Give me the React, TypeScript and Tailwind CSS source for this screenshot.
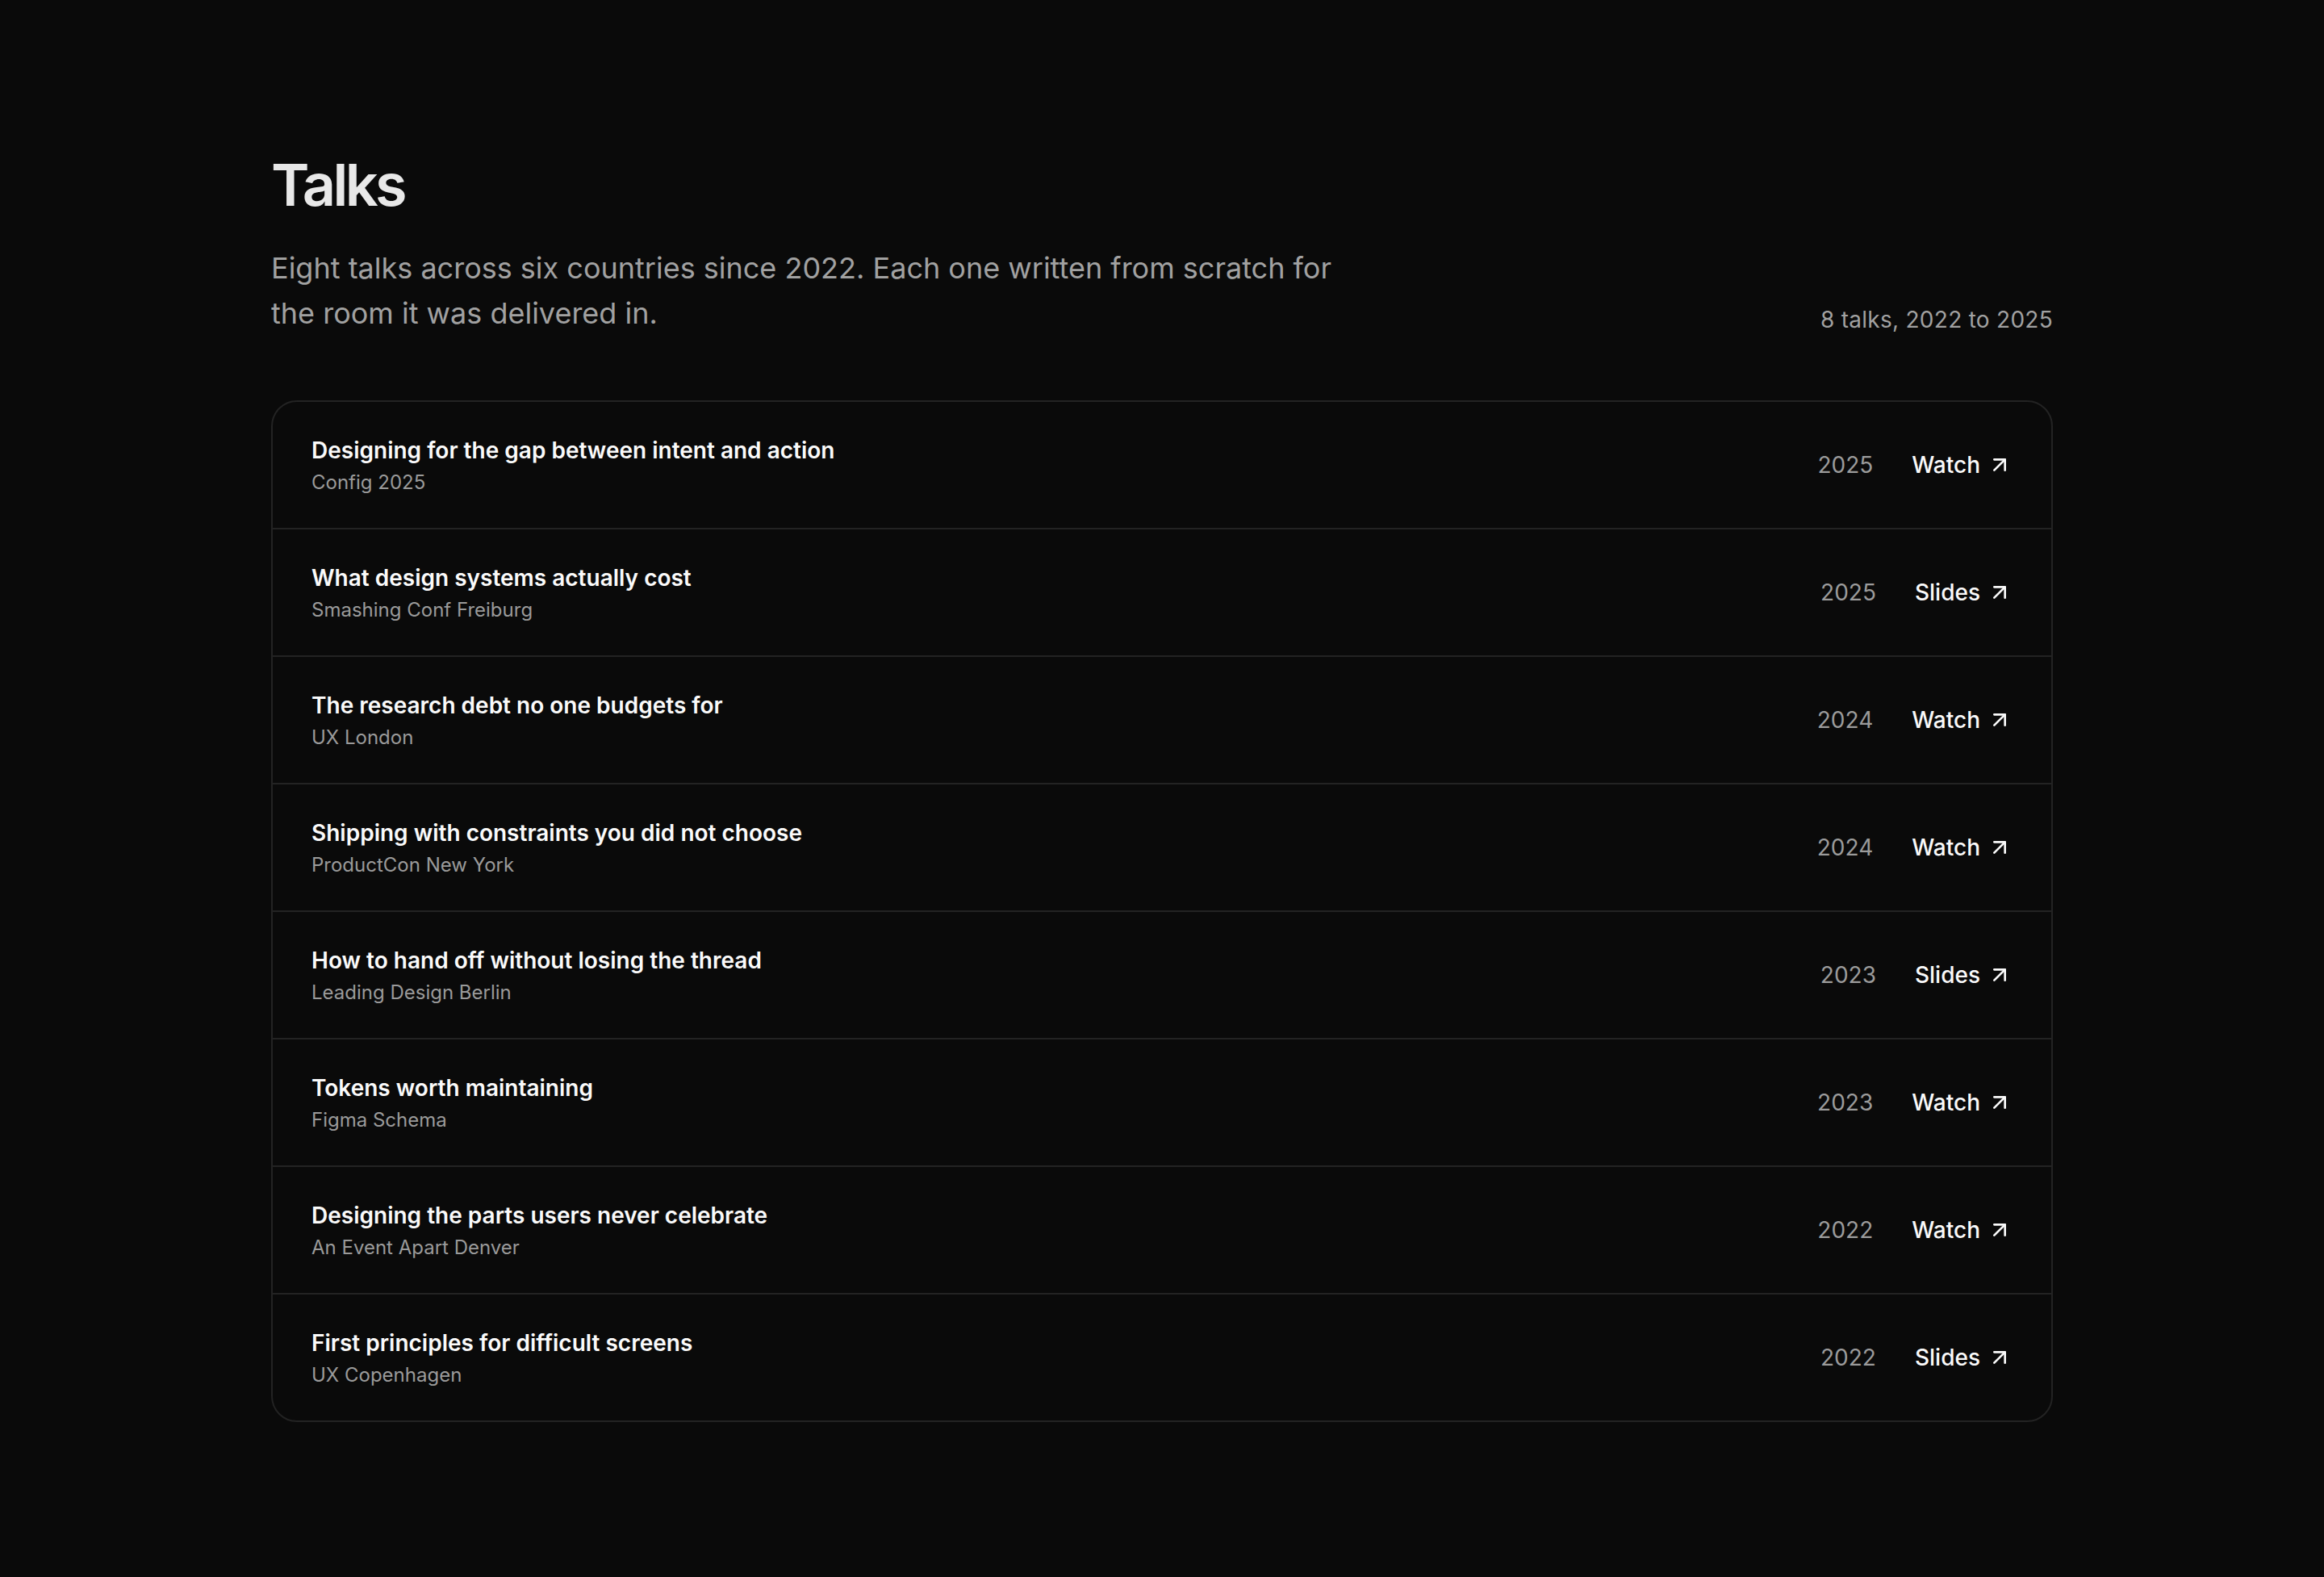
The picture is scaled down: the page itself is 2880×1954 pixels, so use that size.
import React from 'react';
import { ArrowUpRight } from 'lucide-react';

interface Talk {
  title: string;
  event: string;
  year: number;
  kind: 'Watch' | 'Slides';
}

const talks: Talk[] = [
  { title: 'Designing for the gap between intent and action', event: 'Config 2025', year: 2025, kind: 'Watch' },
  { title: 'What design systems actually cost', event: 'Smashing Conf Freiburg', year: 2025, kind: 'Slides' },
  { title: 'The research debt no one budgets for', event: 'UX London', year: 2024, kind: 'Watch' },
  { title: 'Shipping with constraints you did not choose', event: 'ProductCon New York', year: 2024, kind: 'Watch' },
  { title: 'How to hand off without losing the thread', event: 'Leading Design Berlin', year: 2023, kind: 'Slides' },
  { title: 'Tokens worth maintaining', event: 'Figma Schema', year: 2023, kind: 'Watch' },
  { title: 'Designing the parts users never celebrate', event: 'An Event Apart Denver', year: 2022, kind: 'Watch' },
  { title: 'First principles for difficult screens', event: 'UX Copenhagen', year: 2022, kind: 'Slides' },
];

const TalkRow: React.FC<{ talk: Talk }> = ({ talk }) => (
  <li className="flex items-center justify-between gap-12 px-12 py-10 border-b-2 border-[#232323] last:border-b-0">
    <div className="min-w-0">
      <h3 className="text-[28px] leading-[40px] font-semibold text-[#fafafa]">{talk.title}</h3>
      <p className="mt-1 text-[24px] leading-[32px] text-[#9a9a9a]">{talk.event}</p>
    </div>
    <div className="flex items-center gap-12 shrink-0">
      <span className="text-[28px] leading-[40px] text-[#9b9b9b]">{talk.year}</span>
      <a href="#" className="flex items-center gap-2 text-[28px] leading-[40px] font-medium text-[#fafafa]">
        {talk.kind}
        <ArrowUpRight size={32} strokeWidth={2} />
      </a>
    </div>
  </li>
);

export default function App() {
  return (
    <div className="min-h-screen bg-[#0a0a0a] text-[#e8e8e8]" style={{ fontFamily: 'Inter, "Noto Sans", sans-serif' }}>
      <main className="max-w-[2208px] mx-auto pt-[189px] pb-48">
        <header className="flex items-end justify-between gap-16">
          <div>
            <h1 className="text-[72px] leading-[80px] font-semibold tracking-[-0.05em] text-[#e8e8e8]">Talks</h1>
            <p className="mt-[35px] max-w-[1344px] text-[36px] leading-[56px] text-[#a1a1a1]">
              Eight talks across six countries since 2022. Each one written from scratch for the room it was delivered in.
            </p>
          </div>
          <p className="text-[28px] leading-[40px] tracking-[0.01em] text-[#a1a1a1] shrink-0">8 talks, 2022 to 2025</p>
        </header>

        <ul className="mt-20 rounded-[32px] border-2 border-[#232323] bg-[#0a0a0a]">
          {talks.map((talk) => (
            <TalkRow key={talk.title} talk={talk} />
          ))}
        </ul>
      </main>
    </div>
  );
}
